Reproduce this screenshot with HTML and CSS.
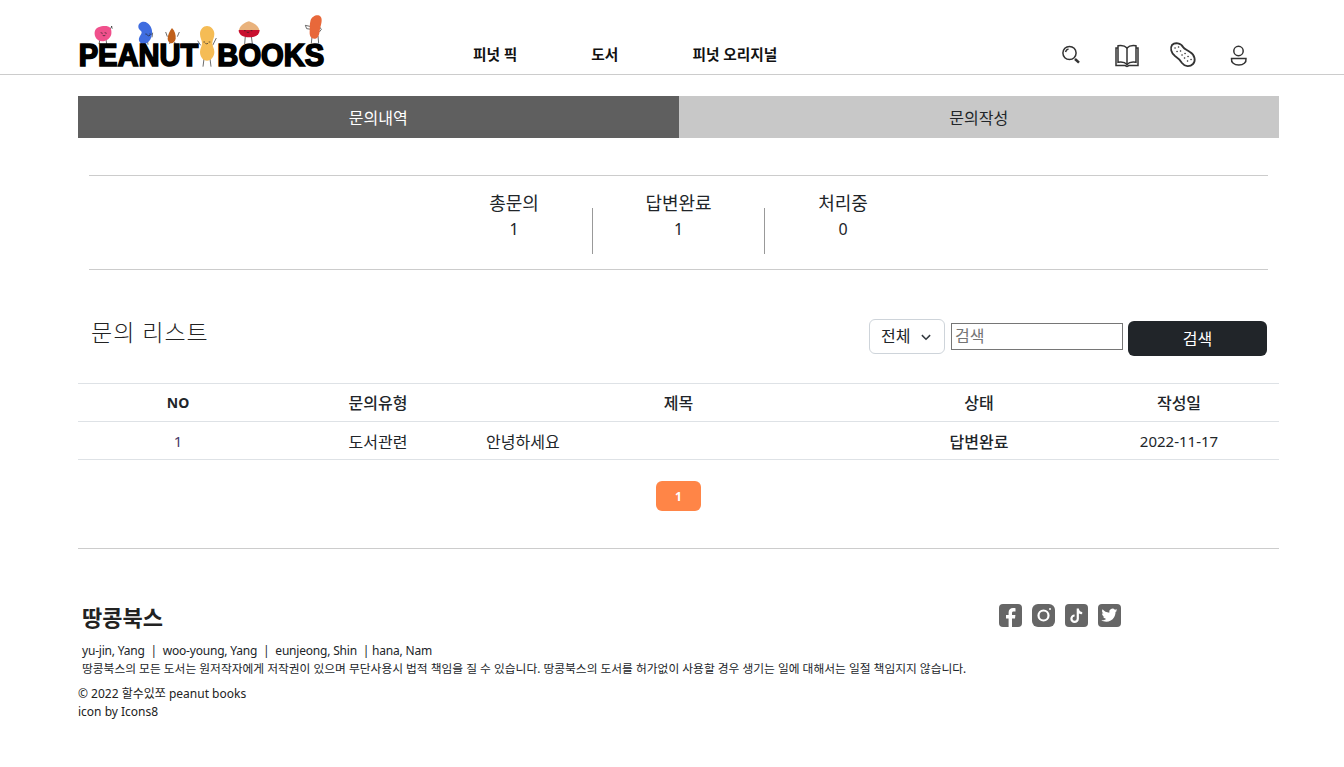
FILE: index.html
```html
<!DOCTYPE html>
<html lang="ko">
<head>
    <meta charset="UTF-8">
    <meta name="viewport" content="width=device-width, initial-scale=1.0">
    <title>피넛북스 문의내역</title>
    <link rel="stylesheet" href="styles.css">
</head>
<body>
    <header class="header">
        <svg class="logo" viewBox="0 0 810 222" width="270" height="74" aria-label="Peanut Books">
            <!-- legs and arms -->
            <g class="logo-limb">
                <path d="M90 118l-3 14M108 118l2 14M118 92l8-14M124 78l3 8"/>
                <path d="M232 120l2 14M246 112l2-14M218 122l-4 10"/>
                <path d="M292 110l-5-14M322 110l6-14M300 126l-1 6M314 126l1 6"/>
                <path d="M392 136l-9-14M428 136l11-22M402 176l-3 24M420 176l3 24"/>
                <path d="M526 108l-2 24M544 108l3 24"/>
                <path d="M726 110l-2 20M744 108l2 22M724 80l-18-4 4 10 14 2M748 80l6 8-6 8"/>
            </g>
            <path class="logo-pink" d="M74 96c2-14 18-18 30-18 16 0 22 8 20 24-2 12-14 22-28 22-14 0-24-14-22-28z"/>
            <path class="logo-blue" d="M205 80c0-13 17-19 27-11 11 8 16 21 14 33-2 15-9 28-24 30-11 0-17-8-15-17 2-8 8-12 8-18 0-6-10-7-10-17z"/>
            <path class="logo-brown" d="M306 84c8 8 12 20 11 32-1 8-8 14-13 14s-11-6-11-14c0-12 7-24 13-32z"/>
            <path class="logo-yellow" d="M390 102c0-14 10-24 21-24s22 10 22 24c0 12-6 18-6 28s6 16 6 26c0 14-10 26-22 26s-21-12-21-26c0-10 6-16 6-26s-6-16-6-28z"/>
            <path class="logo-tan" d="M507 90c2-12 16-22 30-26 12 4 28 12 31 26z"/>
            <path class="logo-red" d="M506 90h63c0 14-12 22-31 22-20 0-32-8-32-22z"/>
            <path class="logo-orange" d="M722 60c4-12 22-20 30-10 6 8 2 22-2 36-2 14-2 26-14 30-12 2-18-8-17-20 1-14-1-22 3-36z"/>
            <g class="logo-face">
                <path d="M92 98l6 2M104 98l6 2M98 106q4 3 8 0"/>
                <path d="M226 102l6 1M238 102l6 1M232 106q4 3 8 0"/>
                <path d="M400 126h5M416 126h5M406 130q4 3 8 0"/>
                <path d="M522 92h5M542 92h5M530 96q4 3 8 0"/>
            </g>
            <text class="logo-text" x="26" y="197" textLength="359" lengthAdjust="spacingAndGlyphs">PEANUT</text>
            <text class="logo-text" x="442" y="197" textLength="321" lengthAdjust="spacingAndGlyphs">BOOKS</text>
        </svg>
        <nav class="nav">
            <a>피넛 픽</a>
            <a>도서</a>
            <a>피넛 오리지널</a>
        </nav>
        <div class="header-icons">
            <svg class="icon" viewBox="0 0 28 28">
                <circle cx="12.5" cy="12" r="6.6"/>
                <path d="M8.5 11a4 4 0 0 1 3-3"/>
                <path class="thick" d="M18 18l4 3.6"/>
            </svg>
            <svg class="icon" viewBox="0 0 28 28">
                <path d="M14 7c-2-2.200-5.500-2.800-9-2.200v16.500c3.500-.6 7-.1 9 2.200 2-2.300 5.500-2.800 9-2.200V4.800c-3.500-.6-7 0-9 2.200z"/>
                <path d="M14 7v17M5 7H3v17.500h9l2 1 2-1h9V7h-2"/>
            </svg>
            <svg class="icon peanut" viewBox="0 0 28 28">
                <path d="M3 4c3-3 9-2 11 2 1 2 4 3 7 5 5 3 6 9 3 12-3 3-8 3-11-1-2-3-4-5-7-7C2 12 1 7 3 4z"/>
                <path class="dots" d="M6 7h.1M9.500 6h.1M8 10.500h.1M11.500 10h.1M13 14h.1M16 12.500h.1M15.500 17h.1M19 15.500h.1M18.500 20h.1M22 18.500h.1"/>
            </svg>
            <svg class="icon" viewBox="0 0 28 28">
                <circle cx="13.500" cy="10" r="4.700"/>
                <path d="M6.500 17.500h14.500c.5 4-2.500 6.500-7.200 6.500S6 21.500 6.500 17.500z"/>
            </svg>
        </div>
    </header>

    <main class="container">
        <div class="tabs">
            <a class="tab tab-active">문의내역</a>
            <a class="tab">문의작성</a>
        </div>

        <section class="summary">
            <div class="summary-item summary-side">
                <div class="summary-label">총문의</div>
                <div>1</div>
            </div>
            <span class="summary-sep"></span>
            <div class="summary-item summary-mid">
                <div class="summary-label">답변완료</div>
                <div>1</div>
            </div>
            <span class="summary-sep"></span>
            <div class="summary-item summary-side">
                <div class="summary-label">처리중</div>
                <div>0</div>
            </div>
        </section>

        <div class="list-head">
            <h2>문의 리스트</h2>
            <form class="search">
                <div class="select">전체
                    <svg viewBox="0 0 16 16" width="12" height="12"><path d="M2.500 5.500L8 11l5.500-5.500"/></svg>
                </div>
                <input class="search-input" type="text" placeholder="검색">
                <button class="search-btn" type="button">검색</button>
            </form>
        </div>

        <table class="board">
            <thead>
                <tr>
                    <th class="col-no">NO</th>
                    <th class="col-type">문의유형</th>
                    <th class="col-title">제목</th>
                    <th class="col-status">상태</th>
                    <th class="col-date">작성일</th>
                </tr>
            </thead>
            <tbody>
                <tr>
                    <td class="num">1</td>
                    <td>도서관련</td>
                    <td class="title-cell">안녕하세요</td>
                    <td class="status-cell">답변완료</td>
                    <td class="date-cell">2022-11-17</td>
                </tr>
            </tbody>
        </table>

        <div class="pagination">
            <button class="page-btn" type="button">1</button>
        </div>
    </main>

    <footer class="footer">
        <div class="footer-top">
            <h3>땅콩북스</h3>
            <div class="social">
                <svg viewBox="0 0 23 23"><rect width="23" height="23" rx="4"/><path class="cut" d="M13 23v-8.500h3l.4-3.500H13V9c0-1 .4-1.600 1.700-1.600h1.800V4.300c-.6-.1-1.500-.2-2.500-.2-2.600 0-4.400 1.600-4.400 4.500V11H7v3.500h2.600V23z"/></svg>
                <svg viewBox="0 0 23 23"><rect width="23" height="23" rx="6"/><circle class="ring" cx="11.500" cy="11.500" r="5"/><circle class="cut" cx="18" cy="5" r="1"/></svg>
                <svg viewBox="0 0 23 23"><rect width="23" height="23" rx="4"/><path class="ring" d="M12.800 4.500v10.200a3.200 3.200 0 1 1-3.200-3.200M12.800 5c.3 2.400 1.800 4 4.400 4.200"/></svg>
                <svg viewBox="0 0 23 23"><rect width="23" height="23" rx="4"/><path class="cut" d="M19.500 6.200c-.6.300-1.200.4-1.900.5.700-.4 1.200-1 1.400-1.800-.6.400-1.300.7-2.100.8a3.300 3.300 0 0 0-5.600 3c-2.700-.1-5.200-1.400-6.800-3.400-.9 1.500-.4 3.400 1 4.400-.5 0-1-.2-1.500-.4 0 1.600 1.100 3 2.600 3.300-.5.100-1 .1-1.500 0 .4 1.300 1.600 2.200 3.100 2.300-1.400 1.100-3.200 1.600-4.900 1.400 4.400 2.800 10.200 1.400 12.800-3 1-1.700 1.500-3.600 1.400-5.200.7-.5 1.300-1.100 1.800-1.800z"/></svg>
            </div>
        </div>
        <p class="names">yu-jin, Yang &nbsp;|&nbsp; woo-young, Yang &nbsp;|&nbsp; eunjeong, Shin &nbsp;| hana, Nam</p>
        <p class="notice">땅콩북스의 모든 도서는 원저작자에게 저작권이 있으며 무단사용시 법적 책임을 질 수 있습니다. 땅콩북스의 도서를 허가없이 사용할 경우 생기는 일에 대해서는 일절 책임지지 않습니다.</p>
        <p class="copy">© 2022 할수있쪼 peanut books</p>
        <p class="copy">icon by Icons8</p>
    </footer>
</body>
</html>
```

FILE: styles.css
```css
* {
    margin: 0;
    padding: 0;
    box-sizing: border-box;
}

body {
    font-family: "Noto Sans", "Noto Sans CJK KR", sans-serif;
    background: #fff;
    color: #212529;
    font-size: 16px;
}

.header {
    display: flex;
    align-items: flex-start;
    height: 75px;
    padding-left: 70px;
    border-bottom: 1px solid #ccc;
}

.logo {
    flex: none;
}

.logo-limb, .logo-face {
    fill: none;
    stroke: #222;
    stroke-width: 2;
}

.logo-pink { fill: #f0508c; }
.logo-blue { fill: #3f6de0; }
.logo-brown { fill: #c0601a; }
.logo-yellow { fill: #f5bc55; }
.logo-tan { fill: #e9b27c; }
.logo-red { fill: #c8102e; }
.logo-orange { fill: #e8683a; }

.logo-text {
    font-family: "Liberation Sans", sans-serif;
    font-weight: 700;
    font-size: 92px;
    fill: #000;
    stroke: #000;
    stroke-width: 5;
}

.nav {
    display: flex;
    gap: 74px;
    margin-left: 133px;
    margin-top: 44px;
    font-size: 14.7px;
    font-weight: 700;
    line-height: 20px;
    color: #111;
}

.header-icons {
    display: flex;
    gap: 28px;
    margin-left: auto;
    margin-right: 91px;
    margin-top: 41px;
}

.icon {
    width: 28px;
    height: 28px;
    fill: none;
    stroke: #333;
    stroke-width: 1.5;
}

.icon .thick {
    stroke-width: 2.500;
}

.peanut {
    stroke-width: 1.800;
}

.icon .dots {
    stroke-width: 1.500;
    stroke-linecap: round;
}

.container {
    width: 1201px;
    margin: 21px 0 0 78px;
}

.tabs {
    display: flex;
    height: 42px;
}

.tab {
    flex: 1;
    display: flex;
    align-items: center;
    justify-content: center;
    background: #c8c8c8;
    color: #212529;
}

.tab-active {
    background: #5f5f5f;
    color: #fff;
}

.summary {
    display: flex;
    height: 95px;
    margin: 37px 11px 0;
    padding: 14px 0 0 347px;
    border-top: 1px solid #ccc;
    border-bottom: 1px solid #ccc;
    line-height: 26px;
    text-align: center;
}

.summary-side {
    width: 156px;
}

.summary-mid {
    width: 171px;
}

.summary-label {
    font-size: 18px;
}

.summary-sep {
    width: 1px;
    height: 46px;
    margin-top: 18px;
    background: #999;
}

.list-head {
    display: flex;
    align-items: flex-start;
    justify-content: space-between;
    height: 113px;
    padding: 44px 12px 0 13px;
}

.list-head h2 {
    font-size: 23px;
    font-weight: 300;
    line-height: 36px;
    letter-spacing: 1px;
    color: #222;
}

.search {
    display: flex;
    align-items: flex-start;
    gap: 6px;
    margin-top: 5px;
}

.select {
    display: flex;
    align-items: center;
    justify-content: space-between;
    width: 76px;
    height: 35px;
    padding: 0 12px 3px 11px;
    border: 1px solid #ced4da;
    border-radius: 6px;
}

.select svg {
    fill: none;
    stroke: #343a40;
    stroke-width: 2;
    margin-top: 3px;
}

.search-input {
    width: 172px;
    height: 27px;
    margin-top: 4px;
    padding: 0 3px 2px;
    border: 1px solid #767676;
    font-family: inherit;
    font-size: 16px;
}

.search-input::placeholder {
    color: #757575;
}

.search-btn {
    width: 139px;
    height: 35px;
    margin: 2px 0 0 -1px;
    padding-bottom: 2px;
    background: #212529;
    color: #fff;
    border: none;
    border-radius: 6px;
    font-family: inherit;
    font-size: 16px;
}

.board {
    width: 100%;
    border-collapse: collapse;
    table-layout: fixed;
    text-align: center;
}

.board th, .board td {
    height: 38px;
    padding: 0 8px;
    border-top: 1px solid #dee2e6;
    border-bottom: 1px solid #dee2e6;
}

.board th {
    padding-bottom: 2px;
    font-weight: 500;
}

.board .col-no {
    padding-bottom: 0;
    font-size: 14px;
    font-weight: 700;
}

.col-no, .col-type, .col-status, .col-date {
    width: 200px;
}

.col-title {
    width: 401px;
}

.title-cell {
    text-align: left;
}

.status-cell {
    font-weight: 500;
}

.board .num, .board .date-cell {
    font-size: 15px;
}

.num {
    color: #4a3a6a;
}

.pagination {
    display: flex;
    justify-content: center;
    margin-top: 21px;
    padding-bottom: 37px;
    border-bottom: 1px solid #ccc;
}

.page-btn {
    width: 45px;
    height: 30px;
    background: #ff8547;
    border: none;
    border-radius: 6px;
    color: #fff;
    font-family: inherit;
    font-size: 12px;
    font-weight: 700;
}

.footer {
    margin: 54px 0 0 78px;
    font-size: 12px;
    line-height: 18px;
}

.footer-top {
    display: flex;
    align-items: flex-start;
    height: 39px;
    padding-left: 4px;
}

.footer-top h3 {
    width: 917px;
    font-size: 22px;
    line-height: 28px;
    font-weight: 700;
    color: #222;
}

.social {
    display: flex;
    gap: 10px;
    margin-top: 1px;
}

.social svg {
    width: 23px;
    height: 23px;
    fill: #666;
}

.social .cut {
    fill: #fff;
}

.social .ring {
    fill: none;
    stroke: #fff;
    stroke-width: 2.200;
}

.names, .notice {
    padding-left: 4px;
}

.names {
    letter-spacing: -0.2px;
}

.notice {
    margin-top: -1px;
    font-size: 11.75px;
}

.copy {
    color: #222;
}

.notice + .copy {
    margin-top: 8px;
}
```
